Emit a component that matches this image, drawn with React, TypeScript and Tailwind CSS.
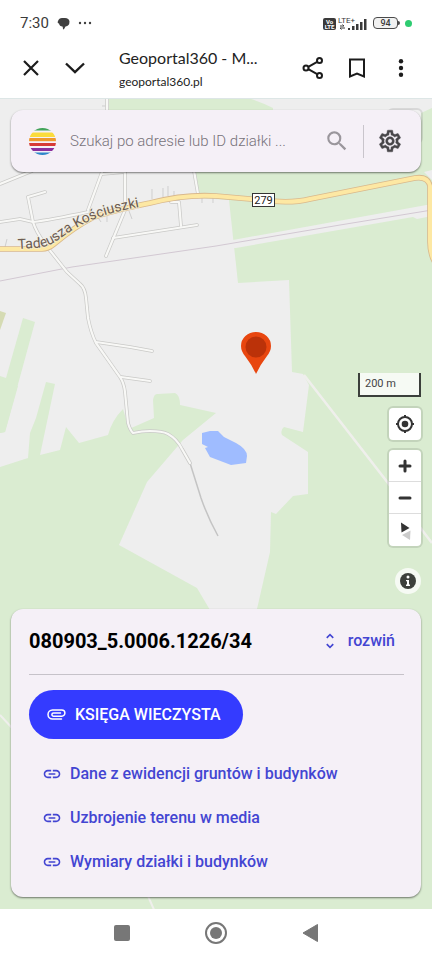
import type { ReactNode } from "react";
import {
  MdInsertLink,
  MdOutlineSettings,
  MdSearch,
  MdUnfoldMore,
} from "react-icons/md";

const whiteRoads = [
  "M45 192 L28 197 L33 222 C37 235 44 242 48 248 L67 272 L80 284 Q85 288 86 298 L88 318 Q91 333 96 343 L120 377 Q124 383 125 392 L128 423 Q130 430 133 433 Q142 431 150 431 Q162 431 168 434 Q177 439 182 449 L190 463",
  "M96 342 L130 347 L152 351",
  "M121 377 L150 381",
  "M0 222 L20 219 L33 222 Q50 220 88 212",
  "M102 172 L88 210",
  "M102 174 L125 172",
  "M125 165 L125 210 L106 256",
  "M113 238 L197 225",
  "M171 202 L179 202 L181 226",
  "M0 184 L32 171",
  "M193 165 L198 194",
  "M107 95 L107 112",
];

const greens = [
  "M432 108 L421 113 L421 140 L273 140 L273 108 Q255 99 236 95 L109 95 L109 140 L192 150 L199 198 L229 200 L238 283 L289 280 L292 372 L303 374 L309 385 L303 432 L284 427 Q280 430 282 435 L308 452 L308 494 L293 496 L276 514 L271 512 L270 552 L257 609 L257 640 L432 640 Z",
  "M0 467 L28 458 L30 433 L36 418 L46 382 L55 384 L40 455 L60 450 L66 427 L79 443 L108 435 Q112 420 123 409 L129 429 L154 418 L153 400 Q154 393 158 394 L175 393 Q180 395 180 405 L216 413 L183 440 L147 482 L119 545 L197 588 L210 610 L210 640 L432 640 L432 909 L0 909 Z",
  "M0 376 L6 378 L23 318 L35 322 L5 432 L0 433 Z",
  "M0 380 L0 433 L5 432 L18 386 Z",
];

function MapCanvas() {
  return (
    <svg
      viewBox="0 99 432 810"
      preserveAspectRatio="xMidYMin slice"
      className="absolute inset-0 h-full w-full"
      role="img"
      aria-label="Mapa"
    >
      <rect x="0" y="90" width="432" height="830" fill="#eeeeee" />
      {greens.map((d) => (
        <path key={d} d={d} fill="#daecd1" />
      ))}
      <path d="M0 311 L6 313 L0 330 Z" fill="#d5dbb3" />
      <path d="M233 240 L432 204 L432 216 L417 219 L413 217 L236 248 L230 248 Z" fill="#eeeeee" />
      <path d="M424 172 L432 170 L432 180 Z" fill="#eeeeee" />
      <path d="M304 375 L388 483 L422 530 L432 543" fill="none" stroke="#efefec" strokeWidth="2.500" />
      <path d="M0 715 L14 730 M148 896 L155 912" fill="none" stroke="#efefec" strokeWidth="2" />
      <path
        d="M202 433 L210 431 L218 431 L224 437 L236 443 Q247 449 247 456 L246 463 L231 465 L210 457 L205 448 L208 447 L202 444 Z"
        fill="#9fbcff"
      />
      <path d="M0 281 L72 267 L216 246 L340 225 L432 210" fill="none" stroke="#d2c8d2" strokeWidth="1" />
      <path
        d="M152 189 V199 M163 188 V197 M168 186 V196 M174 191 V197 M7 239 L5 247 M97 216 L101 222 M107 216 V222 M129 211 L132 219 M202 196 V203 M213 197 V203 M102 106 H107"
        fill="none"
        stroke="#cfcfcf"
        strokeWidth="1"
      />
      <path d="M190 463 L201 498 Q208 518 218 536" fill="none" stroke="#c4c4c4" strokeWidth="1.500" />
      <g fill="none" strokeLinecap="round" strokeLinejoin="round">
        {whiteRoads.map((d) => (
          <path key={d} d={d} stroke="#c9c9c7" strokeWidth="3.600" />
        ))}
        {whiteRoads.map((d) => (
          <path key={`${d}-fill`} d={d} stroke="#f8f8f6" strokeWidth="2.200" />
        ))}
        <path
          d="M-4 249 L42 249 Q48 249 54 244 Q76 226 92 218 Q110 211 150 203 Q185 194 216 196 L262 200 Q290 204 310 199 L415 178 Q428 176 430 186 L430 242 Q430 255 436 264"
          stroke="#d9b88c"
          strokeWidth="5.600"
        />
        <path
          d="M-4 249 L42 249 Q48 249 54 244 Q76 226 92 218 Q110 211 150 203 Q185 194 216 196 L262 200 Q290 204 310 199 L415 178 Q428 176 430 186 L430 242 Q430 255 436 264"
          stroke="#fde8a3"
          strokeWidth="4"
        />
      </g>
      <path id="street-label" d="M18 249 L36 248 Q48 247 58 240 Q74 228 92 220 Q110 212 150 205" fill="none" />
      <text
        className="font-[Roboto,sans-serif] text-[14px]"
        fill="#6b5c52"
        stroke="#f3eee2"
        strokeWidth="2"
        strokeOpacity="0.6"
        paintOrder="stroke"
      >
        <textPath href="#street-label">Tadeusza Kościuszki</textPath>
      </text>
      <rect x="252.500" y="193.500" width="22" height="13" fill="#fff" stroke="#333" />
      <text x="263.500" y="204" textAnchor="middle" fill="#222" className="font-[Roboto,sans-serif] text-[11px]">
        279
      </text>
      <path
        d="M256 374 Q252 365 245 356 Q241 351 241 346 A15 14 0 0 1 271 346 Q271 351 267 356 Q260 365 256 374 Z"
        fill="#e8460f"
      />
      <circle cx="256" cy="347" r="10.500" fill="#bb3209" />
    </svg>
  );
}

function StatusBar() {
  return (
    <div className="flex h-[46px] items-center justify-between bg-white px-5 text-[#3a3a3a]">
      <div className="flex items-center gap-2">
        <span className="text-[15px] leading-5">7:30</span>
        <svg viewBox="0 0 13 13" className="size-[13px]" fill="#3f3f3f" aria-hidden="true">
          <path d="M1 4 Q2 1 5 1 H8 Q12 1 12.500 4.500 Q12.500 9 8.500 9.500 Q7.500 12 6 12.500 Q6 10.500 5.500 9.500 Q2.500 9.500 2 6.500 Q0 6 1 4 Z" />
        </svg>
        <svg viewBox="0 0 14 4" className="h-1 w-[14px]" fill="#3f3f3f" aria-hidden="true">
          <circle cx="2" cy="2" r="1.200" />
          <circle cx="7" cy="2" r="1.200" />
          <circle cx="12" cy="2" r="1.200" />
        </svg>
      </div>
      <div className="flex items-center gap-[5px]">
        <svg viewBox="0 0 45 15" className="h-[15px] w-[45px] overflow-visible" fill="#3a3a3a" aria-hidden="true">
          <rect x="0" y="2" width="13" height="12" rx="2" />
          <text x="6.500" y="7.500" textAnchor="middle" fill="#fff" className="text-[6px] font-bold">Vo</text>
          <text x="6.500" y="13" textAnchor="middle" fill="#fff" className="text-[6px] font-bold">LTE</text>
          <text x="15" y="6.500" className="text-[8px]">LTE+</text>
          <path d="M17 10 h4 l-1.500 -1.500 M22 12 h-5 l1.500 1.500" fill="none" stroke="#3a3a3a" strokeWidth="1" />
          <path d="M25 12 h2 v2 h-2 z M29 10 h2.500 v4 h-2.500 z M33 8 h2.500 v6 h-2.500 z M37 6 h2.500 v8 h-2.500 z M41 3 h2.500 v11 h-2.500 z" />
        </svg>
        <div className="flex items-center">
          <span className="flex h-3 w-[25px] items-center justify-center rounded-[4px] border border-[#4a4a4a] bg-[#f1f1f1] text-[9px] font-medium leading-none">
            94
          </span>
          <span className="h-1 w-[2px] rounded-r bg-[#4a4a4a]" />
        </div>
        <span className="size-[7px] rounded-full bg-[#2ecc71]" />
      </div>
    </div>
  );
}

function BarButton({ label, children }: { label: string; children: ReactNode }) {
  return (
    <button type="button" aria-label={label} className="flex size-11 items-center justify-center text-[#1c1c1c]">
      <svg viewBox="0 0 24 24" className="size-6" fill="none" stroke="currentColor" strokeWidth="2" aria-hidden="true">
        {children}
      </svg>
    </button>
  );
}

function BrowserBar() {
  return (
    <header className="flex h-[53px] items-center border-b border-[#dde6e6] bg-white px-[9px] pb-2">
      <BarButton label="Zamknij">
        <path d="M5 5 L19 19 M19 5 L5 19" strokeWidth="2.200" />
      </BarButton>
      <BarButton label="Rozwiń pasek">
        <path d="M3 7.500 L12 16 L21 7.500" strokeWidth="2.400" />
      </BarButton>
      <div className="ml-[22px] min-w-0 flex-1 pt-1 font-[Lato,sans-serif] text-[#222]">
        <h1 className="truncate text-[16px] leading-6">Geoportal360 - M...</h1>
        <p className="truncate text-[12px] leading-6">geoportal360.pl</p>
      </div>
      <BarButton label="Udostępnij">
        <circle cx="18.500" cy="4.500" r="2.500" />
        <circle cx="5" cy="12" r="2.500" />
        <circle cx="18.500" cy="19.500" r="2.500" />
        <path d="M7.300 10.800 L16.200 5.800 M7.300 13.200 L16.200 18.200" />
      </BarButton>
      <BarButton label="Dodaj zakładkę">
        <path d="M5 3.500 H19 V20.500 L12 17.500 L5 20.500 Z" />
      </BarButton>
      <BarButton label="Więcej">
        <g fill="currentColor" stroke="none">
          <circle cx="12" cy="5.200" r="2.200" />
          <circle cx="12" cy="12" r="2.200" />
          <circle cx="12" cy="18.800" r="2.200" />
        </g>
      </BarButton>
    </header>
  );
}

function SearchBar() {
  return (
    <form
      role="search"
      className="relative flex h-[62px] items-center rounded-xl bg-[#f5f0f7] px-[18px] shadow-[0_1px_2px_rgba(0,0,0,0.5)]"
    >
      <svg viewBox="0 0 27 27" className="size-[27px] shrink-0" aria-hidden="true">
        <defs>
          <clipPath id="logo-disc">
            <circle cx="13.500" cy="13.500" r="13.500" />
          </clipPath>
        </defs>
        <g clipPath="url(#logo-disc)">
          <rect y="0" width="27" height="2.500" fill="#43a35a" />
          <rect y="4.500" width="27" height="4.500" fill="#fbdc3c" />
          <rect y="10" width="27" height="3.200" fill="#ee9a2c" />
          <rect y="15" width="27" height="3" fill="#d63a36" />
          <rect y="20" width="27" height="3" fill="#8a2f9c" />
          <rect y="24.500" width="27" height="2.500" fill="#2f86c9" />
        </g>
      </svg>
      <input
        type="text"
        aria-label="Szukaj"
        placeholder="Szukaj po adresie lub ID działki ..."
        className="ml-[14px] min-w-0 flex-1 bg-transparent text-[15px] leading-6 text-[#333] outline-none placeholder:font-light placeholder:text-[#77727a]"
      />
      <button type="button" aria-label="Szukaj adresu" className="flex size-[26px] items-center justify-center text-[#9a969c]">
        <MdSearch className="size-[26px]" />
      </button>
      <span className="ml-[13px] h-[33px] w-px bg-[#c9c5cc]" />
      <button type="button" aria-label="Ustawienia" className="ml-[13px] flex size-[26px] items-center justify-center text-[#48464a]">
        <MdOutlineSettings className="size-[26px] [&>path:first-child]:hidden" stroke="currentColor" strokeWidth="0.400" />
      </button>
    </form>
  );
}

function MapControls() {
  const cell = "flex size-8 items-center justify-center text-[#333]";
  return (
    <div className="relative flex flex-1 flex-col items-end justify-end pb-[15px]">
      <div className="h-6 w-[63px] border-2 border-t-0 border-[#3b3f3b] bg-white/75 pl-[5px] text-[11px] leading-[22px] text-[#444]">
        200 m
      </div>
      <div className="mt-[11px] rounded-[4px] bg-white shadow-[0_0_0_2px_rgba(0,0,0,0.1)]">
        <button type="button" aria-label="Moja lokalizacja" className={cell}>
          <svg viewBox="0 0 20 20" className="size-5" fill="none" stroke="currentColor" strokeWidth="2" aria-hidden="true">
            <circle cx="10" cy="10" r="7" />
            <circle cx="10" cy="10" r="3.300" fill="currentColor" stroke="none" />
            <path d="M10 1 V4 M10 16 V19 M1 10 H4 M16 10 H19" />
          </svg>
        </button>
      </div>
      <div className="mt-[10px] flex flex-col divide-y divide-[#ddd] rounded-[4px] bg-white shadow-[0_0_0_2px_rgba(0,0,0,0.1)]">
        <button type="button" aria-label="Przybliż" className={cell}>
          <svg viewBox="0 0 14 14" className="size-[14px]" stroke="currentColor" strokeWidth="3" strokeLinecap="round" aria-hidden="true">
            <path d="M7 2 V12 M2 7 H12" />
          </svg>
        </button>
        <button type="button" aria-label="Oddal" className={cell}>
          <svg viewBox="0 0 14 14" className="size-[14px]" stroke="currentColor" strokeWidth="3" strokeLinecap="round" aria-hidden="true">
            <path d="M2 7 H12" />
          </svg>
        </button>
        <button type="button" aria-label="Obróć na północ" className={cell}>
          <svg viewBox="0 0 20 20" className="size-5" aria-hidden="true">
            <path d="M6 2.500 L6.500 12.500 L14.500 8 Z" fill="#333" />
            <path d="M7 15 L15.500 10.500 L15 20 Z" fill="#ccc" />
          </svg>
        </button>
      </div>
      <button
        type="button"
        aria-label="Informacje o mapie"
        className="mt-[22px] flex size-[26px] items-center justify-center rounded-full bg-white/75"
      >
        <svg viewBox="0 0 16 16" className="size-4" fill="#3d403c" aria-hidden="true">
          <circle cx="8" cy="8" r="8" />
          <circle cx="8" cy="4" r="1.500" fill="#fff" />
          <path d="M6 7 H9 V11.500 H10 V13 H6 V11.500 H7 V8.300 H6 Z" fill="#fff" />
        </svg>
      </button>
    </div>
  );
}

const links = [
  "Dane z ewidencji gruntów i budynków",
  "Uzbrojenie terenu w media",
  "Wymiary działki i budynków",
];

function ParcelCard() {
  return (
    <section className="relative rounded-xl bg-[#f5f0f7] pb-[13px] pl-[18px] pr-[17px] shadow-[0_1px_2px_rgba(0,0,0,0.5)]">
      <div className="flex h-[66px] items-center justify-between border-b border-[#c6c2c9] pb-[2px] pr-[9px]">
        <h2 className="text-[20px] font-bold leading-7 text-black">080903_5.0006.1226/34</h2>
        <button type="button" className="flex items-center gap-[8px] text-[16px] font-medium leading-6 text-[#4345d2]">
          <MdUnfoldMore className="size-5" aria-hidden="true" />
          rozwiń
        </button>
      </div>
      <button
        type="button"
        className="mt-[15px] flex h-[49px] items-center gap-[9px] rounded-full bg-[#343bff] pl-[18px] pr-[22px] text-[16px] font-medium text-white"
      >
        <svg viewBox="0 0 19 11" className="h-[11px] w-[19px]" fill="none" stroke="currentColor" strokeWidth="1.500" strokeLinecap="round" aria-hidden="true">
          <path d="M13.500 4 H6.500 A1.600 1.600 0 0 0 6.500 7.200 H14.800 A3.100 3.100 0 0 0 14.800 1 H5.500 A4.500 4.500 0 0 0 5.500 10 H14.500" />
        </svg>
        KSIĘGA WIECZYSTA
      </button>
      <ul className="mt-[13px]">
        {links.map((text) => (
          <li key={text}>
            <a href="#" className="flex h-11 items-center gap-[8px] pl-[13px] text-[16px] font-medium text-[#4345d2]">
              <MdInsertLink className="size-5" aria-hidden="true" />
              {text}
            </a>
          </li>
        ))}
      </ul>
    </section>
  );
}

function NavBar() {
  return (
    <nav className="flex h-[51px] items-center justify-center gap-[72px] bg-white pb-[3px]">
      <button type="button" aria-label="Ostatnie" className="flex size-[22px] items-center justify-center">
        <span className="size-4 rounded-[2px] bg-[#777]" />
      </button>
      <button type="button" aria-label="Ekran główny" className="flex size-[22px] items-center justify-center rounded-full border-2 border-[#777]">
        <span className="size-3 rounded-full bg-[#777]" />
      </button>
      <button type="button" aria-label="Wstecz" className="flex size-[22px] items-center justify-center">
        <svg viewBox="0 0 16 20" className="h-5 w-4" fill="#777" aria-hidden="true">
          <path d="M15.500 1.500 V18.500 L1 10 Z" stroke="#777" strokeLinejoin="round" />
        </svg>
      </button>
    </nav>
  );
}

export default function App() {
  return (
    <div className="flex min-h-screen flex-col bg-white font-[Roboto,sans-serif]">
      <StatusBar />
      <BrowserBar />
      <main className="relative flex flex-1 flex-col overflow-hidden px-[11px] pb-3 pt-[11px]">
        <MapCanvas />
        <div className="absolute right-[9px] top-[9px] size-9 rounded-md border-2 border-black/10 bg-white/20" />
        <SearchBar />
        <MapControls />
        <ParcelCard />
      </main>
      <NavBar />
    </div>
  );
}
